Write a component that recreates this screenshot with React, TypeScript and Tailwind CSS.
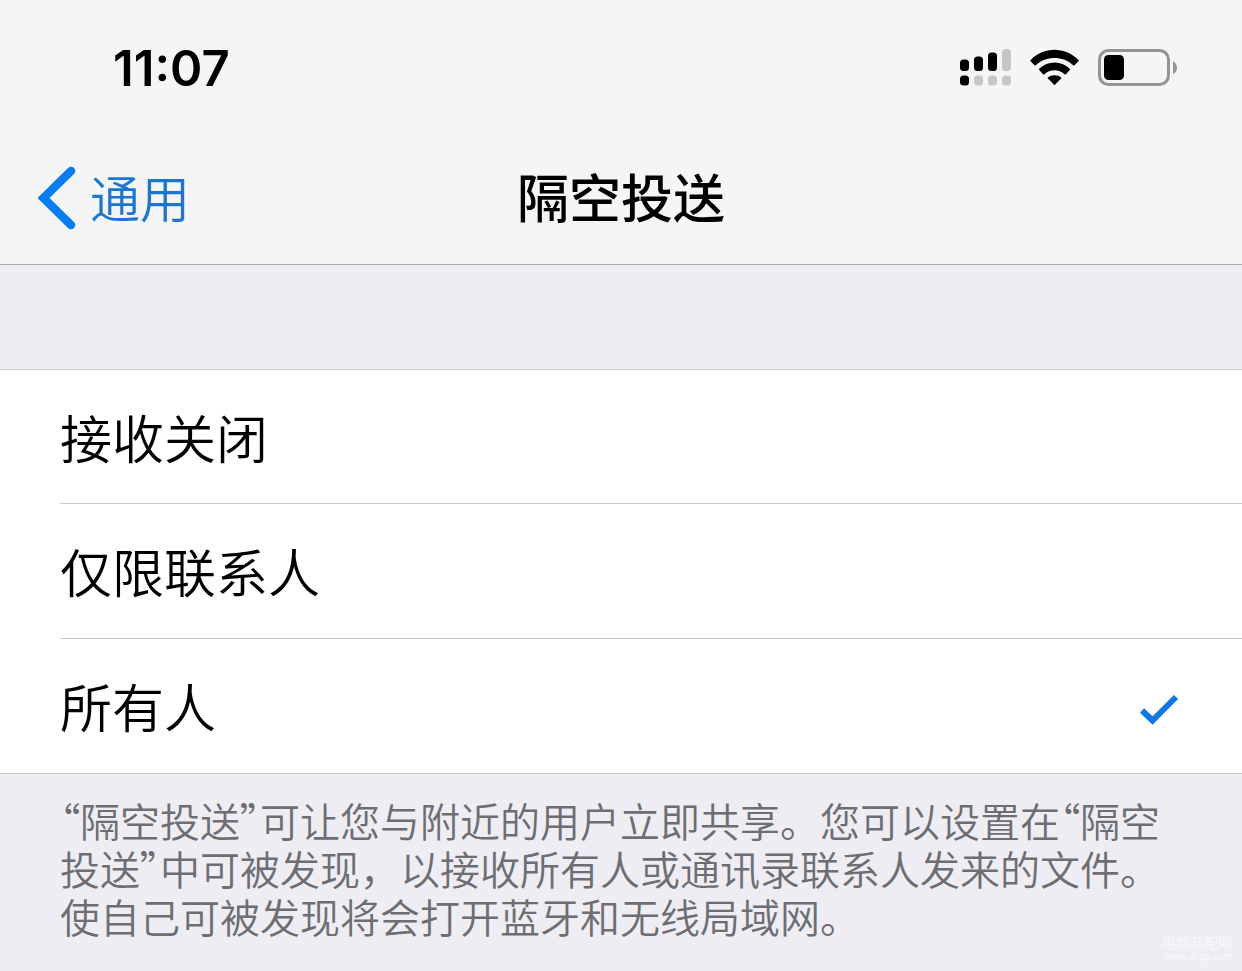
import React, { useState } from 'react';

const OPTIONS = [
  { id: 'off', label: '接收关闭' },
  { id: 'contacts', label: '仅限联系人' },
  { id: 'everyone', label: '所有人' },
];

function SignalIcon() {
  return (
    <svg width="52" height="38" viewBox="0 0 52 38" aria-hidden="true">
      <rect x="0" y="10.500" width="9" height="11.500" rx="3.500" />
      <rect x="14" y="7.500" width="9" height="14.500" rx="3.500" />
      <rect x="28" y="3.500" width="9" height="18.500" rx="3.500" />
      <rect x="42" y="0" width="9" height="22" rx="3.500" fill="#c6c6c8" />
      <rect x="0" y="26.500" width="9" height="10" rx="3.500" />
      <rect x="14" y="26.500" width="9" height="10" rx="3.500" fill="#c6c6c8" />
      <rect x="28" y="26.500" width="9" height="10" rx="3.500" fill="#c6c6c8" />
      <rect x="42" y="26.500" width="9" height="10" rx="3.500" fill="#c6c6c8" />
    </svg>
  );
}

function WifiIcon() {
  return (
    <svg width="50" height="38" viewBox="0 0 50 38" aria-hidden="true">
      <path d="M0.6 11C14 -2.600 35 -2.600 48.400 11Q48.900 11.600 48.400 12.200L44.500 16.200Q43.800 16.800 43.100 16.200C33 6.600 16 6.600 5.900 16.200Q5.200 16.800 4.500 16.200L0.600 12.200Q0.100 11.600 0.600 11Z" />
      <path d="M9.200 19.800C18 11.500 31 11.500 39.800 19.800Q40.400 20.400 39.800 21L35.900 25.200Q35.300 25.800 34.600 25.200C29 19.900 20 19.900 14.400 25.200Q13.700 25.800 13.100 25.200L9.200 21Q8.600 20.400 9.200 19.800Z" />
      <path d="M17.900 28.400C21.500 25.400 27.500 25.400 31.100 28.400Q31.700 29 31.100 29.600L25.200 35.600Q24.500 36.300 23.800 35.600L17.900 29.600Q17.300 29 17.900 28.400Z" />
    </svg>
  );
}

function BatteryIcon() {
  return (
    <svg width="80" height="38" viewBox="0 0 80 38" aria-hidden="true">
      <rect x="1.500" y="1.500" width="69" height="34" rx="9" fill="none" stroke="#949496" strokeWidth="3" />
      <rect x="6" y="6" width="20" height="25" rx="4.500" />
      <path d="M75 12.500C80.300 14.500 80.300 23 75 25Z" fill="#949496" />
    </svg>
  );
}

function BackIcon() {
  return (
    <svg width="38" height="64" viewBox="0 0 38 64" fill="none" aria-hidden="true">
      <path d="M33 5L5.500 32L33 59" stroke="#087cf5" strokeWidth="8.500" strokeLinecap="round" strokeLinejoin="miter" />
    </svg>
  );
}

function CheckIcon() {
  return (
    <svg width="40" height="32" viewBox="0 0 40 32" fill="none" aria-hidden="true">
      <path d="M3 16.500L13.500 26.500L37 3" stroke="#0f78e3" strokeWidth="6" />
    </svg>
  );
}

// Proportional form of the full-width Chinese quotation marks
function Quote({ children }: { children: React.ReactNode }) {
  return <span className="[font-feature-settings:'palt']">{children}</span>;
}

export default function App() {
  const [selected, setSelected] = useState('everyone');

  return (
    <div
      lang="zh-CN"
      className="relative min-h-screen bg-[#eeedf3] font-['Inter','Noto_Sans_CJK_SC',sans-serif] text-black"
    >
      <header className="border-b border-[#acabb0] bg-[#f5f5f8]">
        <div className="flex h-[132px] items-center justify-between pt-1 pr-16 pl-[113px]">
          <time className="pt-px text-[49px] leading-[56px] font-semibold">11:07</time>
          <div className="flex items-center gap-[18px]">
            <SignalIcon />
            <WifiIcon />
            <BatteryIcon />
          </div>
        </div>
        <nav className="grid h-[132px] grid-cols-3 items-center px-[38px]">
          <a href="#general" className="flex items-center gap-[14px] text-[50px] leading-[60px] font-[350] text-[#1a76d2]">
            <BackIcon />
            <span className="pt-1">通用</span>
          </a>
          <h1 id="airdrop-title" className="pt-1 text-center text-[52px] leading-[60px] font-medium">
            隔空投送
          </h1>
        </nav>
      </header>

      <main className="pt-[104px]">
        <div role="radiogroup" aria-labelledby="airdrop-title" className="border-y border-[#c8c7cc] bg-white">
          <div className="grid h-[403px] grid-rows-3 divide-y divide-[#c8c7cc] pl-[60px]">
            {OPTIONS.map((option) => (
              <label
                key={option.id}
                className="relative flex cursor-pointer items-center justify-between pt-2 pr-[63px] text-[52px] leading-[60px] font-[350]"
              >
                <input
                  type="radio"
                  name="airdrop"
                  className="sr-only"
                  checked={selected === option.id}
                  onChange={() => setSelected(option.id)}
                />
                <span>{option.label}</span>
                {selected === option.id && <CheckIcon />}
              </label>
            ))}
          </div>
        </div>
        <p className="px-[60px] pt-[22px] font-['Noto_Sans_CJK_SC',sans-serif] text-[40px] leading-[48px] font-[350] whitespace-nowrap text-[#6d6d72]">
          <Quote>“</Quote>隔空投送<Quote>”</Quote>可让您与附近的用户立即共享。您可以设置在<Quote>“</Quote>隔空
          <br />
          投送<Quote>”</Quote>中可被发现，以接收所有人或通讯录联系人发来的文件。
          <br />
          使自己可被发现将会打开蓝牙和无线局域网。
        </p>
      </main>

      <footer className="absolute right-[10px] bottom-2 flex flex-col items-end text-[#f8f8fb]">
        <span className="text-[14px] leading-4">电脑装配网</span>
        <span className="font-['Liberation_Sans',sans-serif] text-[10px] leading-3">www.dnzp.com</span>
      </footer>
    </div>
  );
}
